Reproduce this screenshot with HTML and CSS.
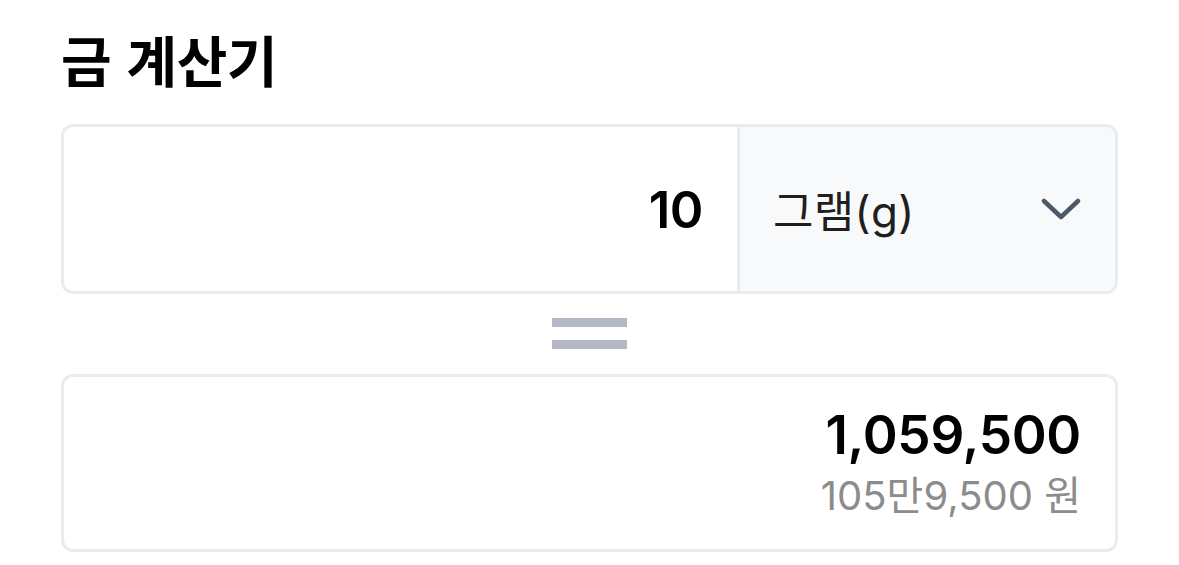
FILE: index.html
```html
<!DOCTYPE html>
<html lang="ko">
<head>
<meta charset="utf-8">
<link rel="stylesheet" href="styles.css">
</head>
<body>
<main class="page">
  <h1 class="title">금 계산기</h1>
  <div class="converter">
    <div class="amount">10</div>
    <div class="unit">
      <span class="unit-label">그램(g)</span>
      <svg class="chevron" width="40" height="24" viewBox="0 0 40 24"><path d="M3 4 L20 20 L37 4" fill="none" stroke="#4e5968" stroke-width="4.5" stroke-linecap="round" stroke-linejoin="round"/></svg>
    </div>
  </div>
  <div class="equals"><span class="bar"></span><span class="bar"></span></div>
  <div class="result">
    <div class="result-value">1,059,500</div>
    <div class="result-sub">105만9,500 원</div>
  </div>
</main>
</body>
</html>
```

FILE: styles.css
```css
* { box-sizing: border-box; }
html, body { margin: 0; padding: 0; background: #fff; }
body {
  font-family: "Inter", "Noto Sans CJK KR", sans-serif;
  color: #000;
}
.page {
  padding: 25px 61px 0 61px;
  width: 1179px;
}
.title {
  margin: 0;
  font-family: "Noto Sans CJK KR", sans-serif;
  font-size: 55px;
  font-weight: 700;
  line-height: 66px;
  height: 99px;
  letter-spacing: -0.3px;
}
.converter {
  display: flex;
  height: 170px;
  border: 3px solid #e9ecee;
  border-radius: 12px;
  overflow: hidden;
}
.amount {
  flex: 1;
  display: flex;
  align-items: center;
  justify-content: flex-end;
  padding-right: 34px;
  font-size: 51px;
  font-weight: 600;
  letter-spacing: -0.5px;
}
.unit {
  width: 378px;
  background: #f8f9fb;
  border-left: 3px solid #e9ecee;
  display: flex;
  align-items: center;
  justify-content: space-between;
  padding: 0 34px 0 33px;
}
.unit-label {
  font-size: 44px;
  font-weight: 400;
  color: #1f1f1f;
  letter-spacing: 0.3px;
}
.chevron { display: block; }
.equals {
  height: 80px;
  display: flex;
  flex-direction: column;
  align-items: center;
  padding-top: 24px;
  gap: 13px;
}
.bar {
  display: block;
  width: 75px;
  height: 9px;
  background: #b3b8c4;
}
.result {
  height: 178px;
  border: 3px solid #e9ecee;
  border-radius: 12px;
  display: flex;
  flex-direction: column;
  align-items: flex-end;
  justify-content: center;
  padding-right: 34px;
  gap: 8px;
}
.result-value {
  font-size: 53px;
  font-weight: 600;
  line-height: 58px;
  letter-spacing: -0.3px;
}
.result-sub {
  font-size: 40px;
  color: #8c8c8c;
  line-height: 48px;
  letter-spacing: 0;
}
```
